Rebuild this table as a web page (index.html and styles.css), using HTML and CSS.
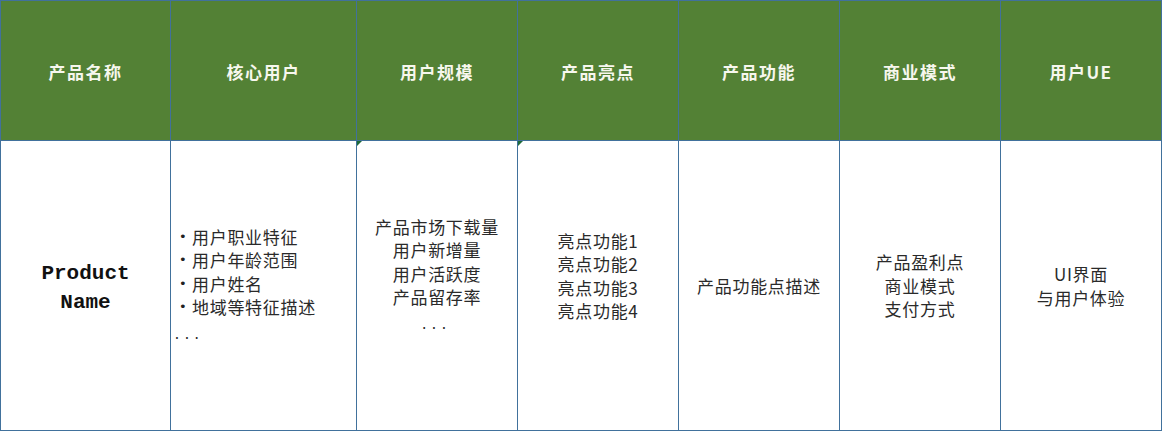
FILE: index.html
```html
<!DOCTYPE html>
<html lang="zh-CN">
<head>
<meta charset="utf-8">
<title>产品分析表</title>
<link rel="stylesheet" href="styles.css">
</head>
<body>
<div class="sheet">
  <div class="head">产品名称</div>
  <div class="head">核心用户</div>
  <div class="head">用户规模</div>
  <div class="head">产品亮点</div>
  <div class="head">产品功能</div>
  <div class="head">商业模式</div>
  <div class="head">用户UE</div>

  <div class="cell product"><div>Product<br>Name</div></div>
  <div class="cell left">
    <div class="list">
      <div class="item"><span class="dot">•</span><span>用户职业特征</span></div>
      <div class="item"><span class="dot">•</span><span>用户年龄范围</span></div>
      <div class="item"><span class="dot">•</span><span>用户姓名</span></div>
      <div class="item"><span class="dot">•</span><span>地域等特征描述</span></div>
      <div class="more">...</div>
    </div>
  </div>
  <div class="cell raised marked">
    <div class="lines">
      <div>产品市场下载量</div>
      <div>用户新增量</div>
      <div>用户活跃度</div>
      <div>产品留存率</div>
      <div class="more">...</div>
    </div>
  </div>
  <div class="cell raised marked">
    <div class="lines">
      <div>亮点功能1</div>
      <div>亮点功能2</div>
      <div>亮点功能3</div>
      <div>亮点功能4</div>
    </div>
  </div>
  <div class="cell"><div class="lines"><div>产品功能点描述</div></div></div>
  <div class="cell">
    <div class="lines">
      <div>产品盈利点</div>
      <div>商业模式</div>
      <div>支付方式</div>
    </div>
  </div>
  <div class="cell">
    <div class="lines">
      <div>UI界面</div>
      <div>与用户体验</div>
    </div>
  </div>
</div>
</body>
</html>
```

FILE: styles.css
```css
html, body {
  margin: 0;
  padding: 0;
  background: #ffffff;
}

.sheet {
  display: grid;
  grid-template-columns: 169px 185px 160px 160px 160px 160px 160px;
  grid-template-rows: 139px 289px;
  gap: 1px;
  padding: 1px;
  width: 1162px;
  height: 431px;
  box-sizing: border-box;
  background: #41719c;
  font-family: "Noto Sans CJK SC", "Noto Sans", sans-serif;
}

.head {
  background: #538135;
  color: #f7f7ee;
  font-weight: 700;
  font-size: 17px;
  letter-spacing: 1.5px;
  display: flex;
  align-items: center;
  justify-content: center;
  padding-top: 1px;
}

.cell {
  background: #ffffff;
  color: #2a2a2a;
  font-size: 17px;
  letter-spacing: 0.7px;
  line-height: 23.5px;
  display: flex;
  align-items: center;
  justify-content: center;
  text-align: center;
  position: relative;
}

.cell.raised {
  padding-bottom: 20px;
}

.cell.marked::before {
  content: "";
  position: absolute;
  left: 0;
  top: 0;
  width: 0;
  height: 0;
  border-top: 5px solid #1e6b3a;
  border-right: 5px solid transparent;
}

.product {
  font-family: "Liberation Mono", "DejaVu Sans Mono", monospace;
  font-weight: 700;
  font-size: 21px;
  line-height: 29px;
  letter-spacing: 0;
  color: #111111;
  padding-top: 4px;
}

.left {
  justify-content: flex-start;
  text-align: left;
  padding-left: 4px;
  padding-top: 0;
}

.item {
  padding-left: 4px;
  display: flex;
  align-items: center;
}

.dot {
  display: inline-block;
  width: 13px;
  flex: 0 0 13px;
  font-family: "DejaVu Sans", sans-serif;
  font-size: 13px;
  letter-spacing: 0;
  color: #222222;
}

.more {
  letter-spacing: 6px;
  font-size: 14px;
  line-height: 28px;
  color: #222222;
}
```
